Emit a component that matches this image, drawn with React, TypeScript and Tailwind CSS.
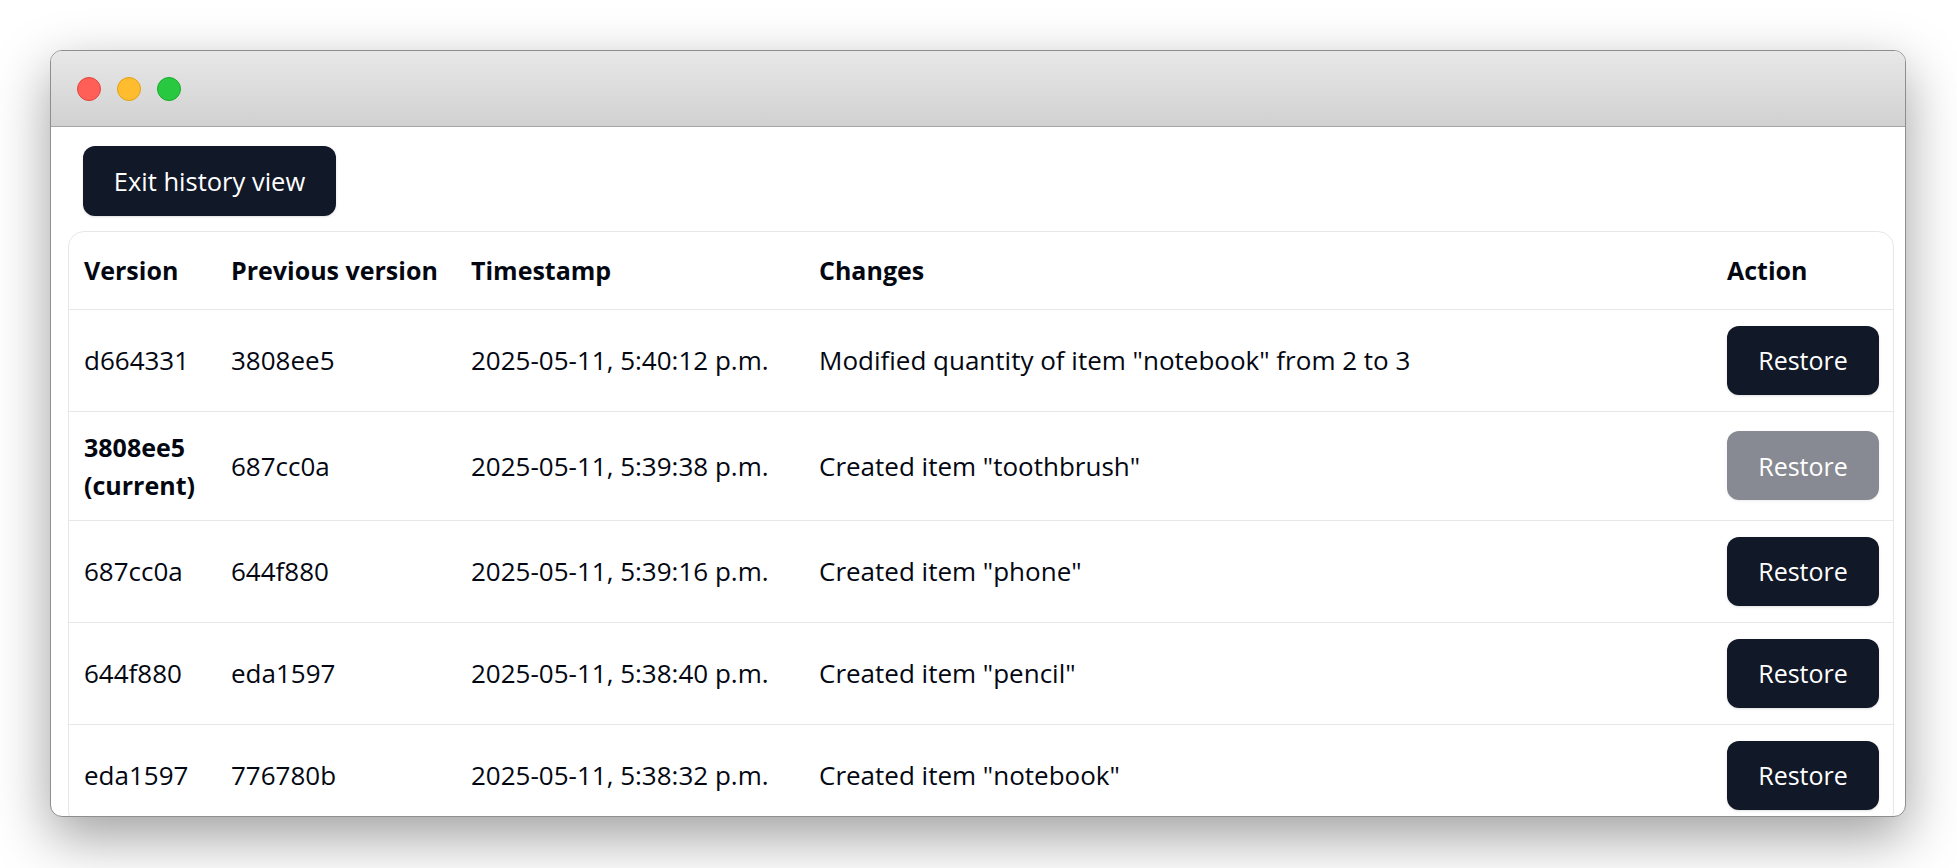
import React from 'react';

interface HistoryRow {
    version: string;
    previous: string;
    timestamp: string;
    changes: string;
    current?: boolean;
}

const rows: HistoryRow[] = [
    { version: 'd664331', previous: '3808ee5', timestamp: '2025-05-11, 5:40:12 p.m.', changes: 'Modified quantity of item "notebook" from 2 to 3' },
    { version: '3808ee5', previous: '687cc0a', timestamp: '2025-05-11, 5:39:38 p.m.', changes: 'Created item "toothbrush"', current: true },
    { version: '687cc0a', previous: '644f880', timestamp: '2025-05-11, 5:39:16 p.m.', changes: 'Created item "phone"' },
    { version: '644f880', previous: 'eda1597', timestamp: '2025-05-11, 5:38:40 p.m.', changes: 'Created item "pencil"' },
    { version: 'eda1597', previous: '776780b', timestamp: '2025-05-11, 5:38:32 p.m.', changes: 'Created item "notebook"' },
];

const App = () => {
    return (
        <div className="min-h-screen bg-white font-['Open_Sans',sans-serif] text-[#030712]">
            <div className="pt-[50px] pl-[50px]">
                {/* Window */}
                <div className="w-[1856px] h-[767px] flex flex-col overflow-hidden rounded-[12px] border border-[#8e8e8e] bg-white shadow-[0_20px_55px_rgba(0,0,0,0.38)]">
                    {/* Title bar */}
                    <div className="h-[76px] shrink-0 flex items-center gap-[16px] pl-[26px] border-b border-[#a6a6a6] bg-gradient-to-b from-[#e8e8e8] to-[#d1d1d1]">
                        <span className="w-[24px] h-[24px] rounded-full bg-[#ff5f57] border border-[#e2463f]" />
                        <span className="w-[24px] h-[24px] rounded-full bg-[#febc2e] border border-[#e1a116]" />
                        <span className="w-[24px] h-[24px] rounded-full bg-[#28c840] border border-[#1aab29]" />
                    </div>

                    {/* Content */}
                    <div className="flex-1 overflow-hidden pl-[17px] pr-[11px] pt-[19px]">
                        <button className="ml-[15px] w-[253px] h-[70px] rounded-[12px] bg-[#111827] text-white text-[25.5px] shadow-sm">
                            Exit history view
                        </button>

                        <div className="mt-[15px] rounded-[16px] border border-[#e5e7eb]">
                            <table className="table-fixed w-full border-collapse text-left">
                                <colgroup>
                                    <col className="w-[147px]" />
                                    <col className="w-[240px]" />
                                    <col className="w-[348px]" />
                                    <col className="w-[908px]" />
                                    <col />
                                </colgroup>
                                <thead>
                                    <tr className="border-b border-[#e5e7eb] text-[25px] font-bold leading-[38px]">
                                        <th className="h-[77px] pl-[15px] align-middle">Version</th>
                                        <th className="pl-[15px] align-middle">Previous version</th>
                                        <th className="pl-[15px] align-middle">Timestamp</th>
                                        <th className="pl-[15px] align-middle">Changes</th>
                                        <th className="pl-[15px] align-middle">Action</th>
                                    </tr>
                                </thead>
                                <tbody className="text-[26px] leading-[38px]">
                                    {rows.map((row) => (
                                        <tr key={row.version} className="border-b border-[#e5e7eb]">
                                            <td className="py-[16px] pl-[15px] align-middle">
                                                {row.current ? (
                                                    <span className="font-bold text-[25px]">
                                                        {row.version}
                                                        <br />
                                                        (current)
                                                    </span>
                                                ) : (
                                                    row.version
                                                )}
                                            </td>
                                            <td className="py-[16px] pl-[15px] align-middle">{row.previous}</td>
                                            <td className="py-[16px] pl-[15px] align-middle">{row.timestamp}</td>
                                            <td className="py-[16px] pl-[15px] align-middle">{row.changes}</td>
                                            <td className="py-[16px] pl-[15px] align-middle">
                                                <button
                                                    disabled={row.current}
                                                    className={
                                                        row.current
                                                            ? 'w-[152px] h-[69px] rounded-[12px] bg-[#111827] opacity-50 text-white text-[25px] shadow-sm'
                                                            : 'w-[152px] h-[69px] rounded-[12px] bg-[#111827] text-white text-[25px] shadow-sm'
                                                    }
                                                >
                                                    Restore
                                                </button>
                                            </td>
                                        </tr>
                                    ))}
                                </tbody>
                            </table>
                        </div>
                    </div>
                </div>
            </div>
        </div>
    );
};

export default App;
